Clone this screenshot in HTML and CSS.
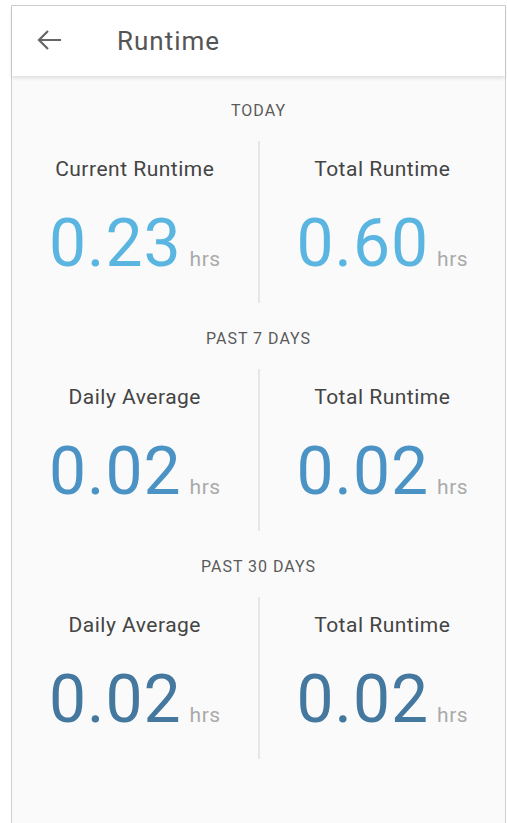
FILE: index.html
```html
<!DOCTYPE html>
<html lang="en">
<head>
    <meta charset="UTF-8">
    <meta name="viewport" content="width=device-width, initial-scale=1.0">
    <title>Runtime</title>
    <link rel="stylesheet" href="styles.css">
</head>
<body>
    <div class="screen">
        <!-- Шапка -->
        <div class="toolbar">
            <svg class="back-icon" width="26" height="22" viewBox="0 0 26 22">
                <path d="M2 11H24M11 2L2 11L11 20" fill="none" stroke="#666" stroke-width="2.2"/>
            </svg>
            <h1 class="toolbar-title">Runtime</h1>
        </div>

        <div class="content">
            <!-- Сегодня -->
            <div class="section today">
                <div class="section-title">TODAY</div>
                <div class="stats">
                    <div class="stat">
                        <div class="stat-label">Current Runtime</div>
                        <div class="stat-value"><span class="num">0.23</span><span class="unit">hrs</span></div>
                    </div>
                    <div class="stat">
                        <div class="stat-label">Total Runtime</div>
                        <div class="stat-value"><span class="num">0.60</span><span class="unit">hrs</span></div>
                    </div>
                </div>
            </div>

            <!-- 7 дней -->
            <div class="section week">
                <div class="section-title">PAST 7 DAYS</div>
                <div class="stats">
                    <div class="stat">
                        <div class="stat-label">Daily Average</div>
                        <div class="stat-value"><span class="num">0.02</span><span class="unit">hrs</span></div>
                    </div>
                    <div class="stat">
                        <div class="stat-label">Total Runtime</div>
                        <div class="stat-value"><span class="num">0.02</span><span class="unit">hrs</span></div>
                    </div>
                </div>
            </div>

            <!-- 30 дней -->
            <div class="section month">
                <div class="section-title">PAST 30 DAYS</div>
                <div class="stats">
                    <div class="stat">
                        <div class="stat-label">Daily Average</div>
                        <div class="stat-value"><span class="num">0.02</span><span class="unit">hrs</span></div>
                    </div>
                    <div class="stat">
                        <div class="stat-label">Total Runtime</div>
                        <div class="stat-value"><span class="num">0.02</span><span class="unit">hrs</span></div>
                    </div>
                </div>
            </div>
        </div>
    </div>
</body>
</html>
```

FILE: styles.css
```css
* {
    margin: 0;
    padding: 0;
    box-sizing: border-box;
    font-family: Roboto, "Liberation Sans", sans-serif;
}

body {
    background-color: #fff;
    height: 823px;
    overflow: hidden;
    padding: 5px 1px 0 11px;
}

.screen {
    height: 100%;
    border: 1px solid #cfcfcf;
    border-bottom: none;
    background-color: #fafafa;
    display: flex;
    flex-direction: column;
}

/* Шапка */
.toolbar {
    height: 70px;
    background: #fff;
    display: flex;
    align-items: center;
    padding-left: 25px;
    box-shadow: 0 2px 4px rgba(0,0,0,0.12);
    position: relative;
    z-index: 1;
}

.back-icon {
    margin-top: -2px;
}

.toolbar-title {
    margin-left: 54px;
    font-size: 26px;
    font-weight: 400;
    letter-spacing: 1px;
    color: #555;
}

/* Секции */
.content {
    padding-top: 25px;
}

.section {
    padding-bottom: 26px;
}

.section-title {
    font-size: 16px;
    line-height: 20px;
    font-weight: 400;
    letter-spacing: 1px;
    color: #5a5a5a;
    text-align: center;
    margin-bottom: 20px;
}

.stats {
    display: flex;
    height: 162px;
}

.stat {
    flex: 1;
    text-align: center;
    padding-top: 16px;
}

.stat + .stat {
    border-left: 2px solid #e6e6e6;
}

.stat-label {
    font-size: 21px;
    line-height: 24px;
    letter-spacing: 0.5px;
    color: #444;
}

.stat-value {
    margin-top: 30px;
    white-space: nowrap;
}

.num {
    font-size: 66px;
    line-height: 66px;
    letter-spacing: 1px;
}

.unit {
    font-size: 21px;
    letter-spacing: 0.5px;
    color: #aaa;
    margin-left: 8px;
}

.today .num { color: #5ab6e0; }
.week .num { color: #4a93c4; }
.month .num { color: #44789f; }
```
